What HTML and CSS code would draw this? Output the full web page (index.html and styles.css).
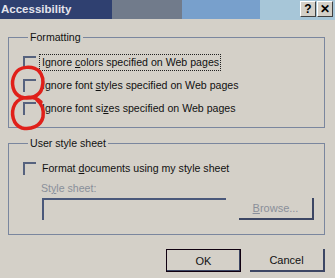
FILE: index.html
```html
<!DOCTYPE html>
<html lang="en">
<head>
    <meta charset="UTF-8">
    <title>Accessibility</title>
    <link rel="stylesheet" href="styles.css">
</head>
<body>
    <div class="titlebar">
        <span class="title">Accessibility</span>
        <div class="seg seg1"></div>
        <div class="seg seg2"></div>
        <div class="seg seg3"></div>
        <div class="seg seg4">
            <span class="tbtn">?</span>
            <span class="tbtn">&#x2715;</span>
        </div>
    </div>

    <div class="dialog">
        <fieldset class="group first">
            <legend>Formatting</legend>
            <div class="row"><span class="check"></span><span class="label focus">Ignore <u>c</u>olors specified on Web pages</span></div>
            <div class="row"><span class="check"></span><span class="label">Ignore font <u>s</u>tyles specified on Web pages</span></div>
            <div class="row"><span class="check"></span><span class="label">Ignore font si<u>z</u>es specified on Web pages</span></div>
        </fieldset>

        <fieldset class="group second">
            <legend>User style sheet</legend>
            <div class="row"><span class="check"></span><span class="label">Format <u>d</u>ocuments using my style sheet</span></div>
            <div class="sub-label">St<u>y</u>le sheet:</div>
            <div class="file-row">
                <div class="textbox"></div>
                <button class="btn disabled"><u>B</u>rowse...</button>
            </div>
        </fieldset>

        <div class="actions">
            <button class="btn default">OK</button>
            <button class="btn">Cancel</button>
        </div>
    </div>

    <svg class="marks" width="335" height="278" viewBox="0 0 335 278">
        <path d="M40 72 C33 65 19 66 15 74 C10 83 13 94 21 97 C30 100 40 96 42 88 C44 81 43 75 38 70" />
        <path d="M41 102 C34 95 20 96 15 104 C10 113 13 125 22 128 C31 130 41 126 43 117 C44 110 42 104 37 100" />
    </svg>
</body>
</html>
```

FILE: styles.css
```css
body { margin: 0; width: 335px; height: 278px; background: #d4d0c8; font-family: "Liberation Sans", Arial, sans-serif; font-size: 10.6px; color: #111; position: relative; overflow: hidden; }

.titlebar { display: flex; height: 19px; position: relative; }
.seg { height: 19px; }
.seg1 { width: 112px; background: #2f4070; }
.seg2 { width: 70px; background: #717b8b; }
.seg3 { width: 78px; background: #78a0cc; }
.seg4 { flex: 1; background: #a7c6d8; display: flex; justify-content: flex-end; align-items: flex-start; gap: 1px; padding: 1px 2px 0 0; }
.title { position: absolute; left: 1px; top: 3px; color: #e4e4ec; font-weight: bold; font-size: 11.5px; }
.tbtn { width: 14px; height: 14px; background: #d4d0c8; border-right: 1px solid #404040; border-bottom: 1px solid #404040; border-top: 1px solid #fff; border-left: 1px solid #fff; font-weight: bold; font-size: 12px; line-height: 14px; text-align: center; color: #000; }

.dialog { padding: 12px 10px 0 8px; }

.group { margin: 0; border: 1px solid #7a869e; padding: 10px 0 10px 14px; }
.group legend { padding: 0 2px; margin-left: 5px; line-height: 13px; color: #111; }
.second { margin-top: 9px; padding-bottom: 14px; }

.row { display: flex; align-items: center; height: 17px; margin-bottom: 6px; }
.row:last-child { margin-bottom: 0; }
.check { width: 11px; height: 11px; border-top: 2px solid #56627e; border-left: 2px solid #56627e; margin-right: 3px; }
.label { padding: 1px 1px 1px 2px; border: 1px dotted transparent; line-height: 13px; }
.label.focus { border-color: #222; }

.sub-label { color: #8a8f9a; padding-left: 18px; height: 14px; line-height: 14px; margin-top: -2px; }
.file-row { display: flex; gap: 13px; margin-top: 3px; padding-left: 19px; }
.textbox { width: 182px; height: 20px; border-top: 2px solid #4a587a; border-left: 2px solid #4a587a; }

.btn { width: 75px; height: 23px; padding: 0; background: #d4d0c8; border: none; border-right: 2px solid #3c4664; border-bottom: 2px solid #3c4664; font-family: inherit; font-size: 11px; color: #111; }
.btn.disabled { width: 75px; height: 22px; color: #8a8f9a; }
.btn.default { border: 1px solid #100010; box-shadow: inset -1px -1px #3c4664; }

.actions { display: flex; justify-content: flex-end; gap: 9px; margin-top: 14px; }

.marks { position: absolute; left: 0; top: 0; pointer-events: none; }
.marks path { fill: none; stroke: #e0201a; stroke-width: 3.5; stroke-linecap: round; }
```
